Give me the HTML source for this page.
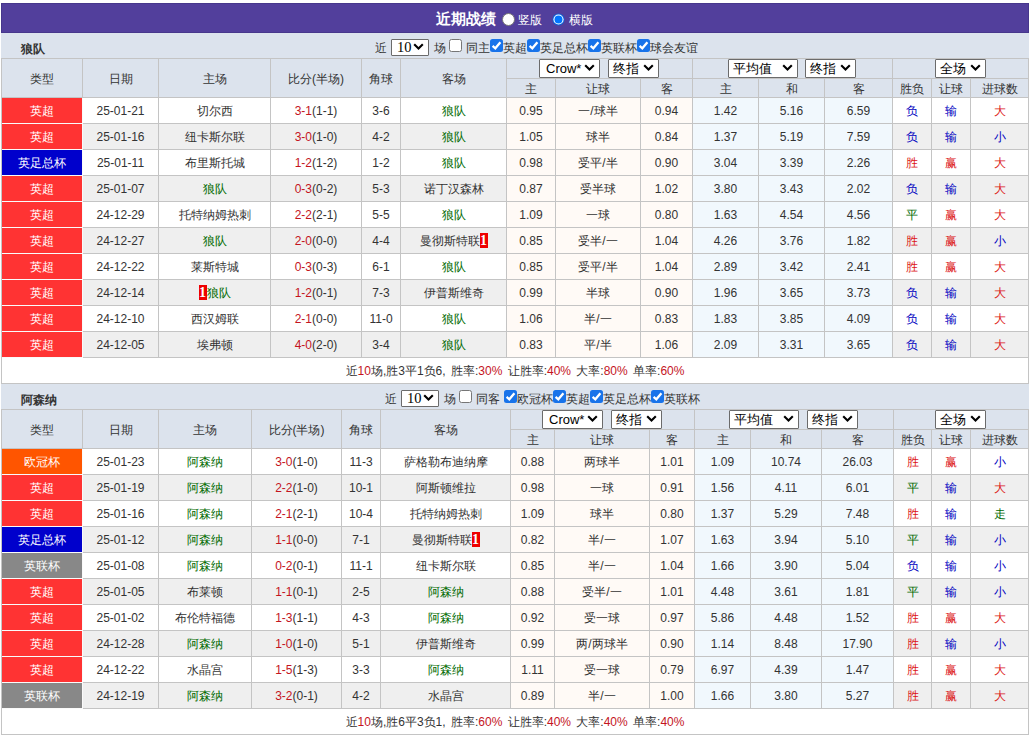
<!DOCTYPE html>
<html><head><meta charset="utf-8"><style>
html,body{margin:0;padding:0;background:#fff;}
body{width:1031px;height:735px;overflow:hidden;position:relative;font-family:"Liberation Sans",sans-serif;font-size:12px;color:#333;}
body>div{position:absolute;}
div svg{display:block;}
.bd{display:inline-block;background:#e00;color:#fff;font-family:"Liberation Serif",serif;font-weight:bold;font-size:14px;line-height:15px;height:15px;width:8px;text-align:center;vertical-align:middle;position:relative;top:-1px;}
</style></head><body>
<div style="left:1px;top:3px;width:1028px;height:30px;background:#523f9c;box-shadow:inset 0 0 0 1px #47378c"></div>
<div style="left:1px;top:33px;width:1028px;height:1px;background:#e4e3f7"></div>
<div style="left:436px;top:4px;white-space:nowrap;font-size:15px;font-weight:bold;color:#fff;line-height:30px">近期战绩</div>
<div style="left:502px;top:13px;width:13px;height:13px;"><svg width="13" height="13" viewBox="0 0 13 13"><circle cx="6.5" cy="6.5" r="6" fill="#fff" stroke="#767676" stroke-width="1"/></svg></div>
<div style="left:518px;top:5px;white-space:nowrap;font-size:12px;color:#fff;line-height:30px">竖版</div>
<div style="left:552px;top:13px;width:13px;height:13px;"><svg width="13" height="13" viewBox="0 0 13 13"><circle cx="6.5" cy="6.5" r="6" fill="#0a62d8"/><circle cx="6.5" cy="6.5" r="5.1" fill="#fff"/><circle cx="6.5" cy="6.5" r="4" fill="#0075ff"/></svg></div>
<div style="left:569px;top:5px;white-space:nowrap;font-size:12px;color:#fff;line-height:30px">横版</div>
<div style="left:1px;top:33px;width:1028px;height:25px;background:#dce3ed"></div>
<div style="left:21px;top:37px;white-space:nowrap;font-weight:bold;line-height:25px">狼队</div>
<div style="left:375px;top:36px;white-space:nowrap;line-height:25px">近</div>
<div style="left:391px;top:39px;width:38px;height:17px;background:#fff;border:1px solid #6b6b6b;border-radius:1px;box-sizing:border-box"><span style="position:absolute;left:5px;top:0px;line-height:15px;font-size:13px;color:#000"><span style="font-family:Liberation Serif;font-size:14.5px">10</span></span><svg width="11" height="7" viewBox="0 0 11 7" style="position:absolute;right:4px;top:3px"><path d="M1.2 1.2 L5.5 5.5 L9.8 1.2" fill="none" stroke="#000" stroke-width="2.1"/></svg></div>
<div style="left:434px;top:36px;white-space:nowrap;line-height:25px">场</div>
<div style="left:449px;top:39px;width:13px;height:13px;"><svg width="13" height="13" viewBox="0 0 13 13"><rect x="0.5" y="0.5" width="12" height="12" rx="2" fill="#fff" stroke="#767676" stroke-width="1"/></svg></div>
<div style="left:466px;top:36px;white-space:nowrap;line-height:25px">同主</div>
<div style="left:490px;top:39px;width:13px;height:13px;"><svg width="13" height="13" viewBox="0 0 13 13"><rect x="0" y="0" width="13" height="13" rx="2.5" fill="#1873ea"/><path d="M2.6 6.9 L5.3 9.3 L10.4 3.2" fill="none" stroke="#fff" stroke-width="2.3"/></svg></div>
<div style="left:503px;top:36px;white-space:nowrap;line-height:25px">英超</div>
<div style="left:527px;top:39px;width:13px;height:13px;"><svg width="13" height="13" viewBox="0 0 13 13"><rect x="0" y="0" width="13" height="13" rx="2.5" fill="#1873ea"/><path d="M2.6 6.9 L5.3 9.3 L10.4 3.2" fill="none" stroke="#fff" stroke-width="2.3"/></svg></div>
<div style="left:540px;top:36px;white-space:nowrap;line-height:25px">英足总杯</div>
<div style="left:588px;top:39px;width:13px;height:13px;"><svg width="13" height="13" viewBox="0 0 13 13"><rect x="0" y="0" width="13" height="13" rx="2.5" fill="#1873ea"/><path d="M2.6 6.9 L5.3 9.3 L10.4 3.2" fill="none" stroke="#fff" stroke-width="2.3"/></svg></div>
<div style="left:601px;top:36px;white-space:nowrap;line-height:25px">英联杯</div>
<div style="left:637px;top:39px;width:13px;height:13px;"><svg width="13" height="13" viewBox="0 0 13 13"><rect x="0" y="0" width="13" height="13" rx="2.5" fill="#1873ea"/><path d="M2.6 6.9 L5.3 9.3 L10.4 3.2" fill="none" stroke="#fff" stroke-width="2.3"/></svg></div>
<div style="left:650px;top:36px;white-space:nowrap;line-height:25px">球会友谊</div>
<div style="left:1px;top:58px;width:1028px;height:39px;background:#dce3ed"></div>
<div style="left:1px;top:58px;width:1028px;height:1px;background:#c4c4c4"></div>
<div style="left:506px;top:78px;width:523px;height:1px;background:#c4c4c4"></div>
<div style="left:1px;top:58px;width:1px;height:40px;background:#c4c4c4"></div>
<div style="left:82px;top:58px;width:1px;height:40px;background:#c4c4c4"></div>
<div style="left:158px;top:58px;width:1px;height:40px;background:#c4c4c4"></div>
<div style="left:270px;top:58px;width:1px;height:40px;background:#c4c4c4"></div>
<div style="left:361px;top:58px;width:1px;height:40px;background:#c4c4c4"></div>
<div style="left:400px;top:58px;width:1px;height:40px;background:#c4c4c4"></div>
<div style="left:506px;top:58px;width:1px;height:40px;background:#c4c4c4"></div>
<div style="left:692px;top:58px;width:1px;height:40px;background:#c4c4c4"></div>
<div style="left:892px;top:58px;width:1px;height:40px;background:#c4c4c4"></div>
<div style="left:1028px;top:58px;width:1px;height:40px;background:#c4c4c4"></div>
<div style="left:555px;top:78px;width:1px;height:20px;background:#c4c4c4"></div>
<div style="left:640px;top:78px;width:1px;height:20px;background:#c4c4c4"></div>
<div style="left:758px;top:78px;width:1px;height:20px;background:#c4c4c4"></div>
<div style="left:824px;top:78px;width:1px;height:20px;background:#c4c4c4"></div>
<div style="left:931px;top:78px;width:1px;height:20px;background:#c4c4c4"></div>
<div style="left:970px;top:78px;width:1px;height:20px;background:#c4c4c4"></div>
<div style="left:2px;top:59px;width:80px;height:38px;line-height:40px;text-align:center;white-space:nowrap;">类型</div>
<div style="left:83px;top:59px;width:75px;height:38px;line-height:40px;text-align:center;white-space:nowrap;">日期</div>
<div style="left:159px;top:59px;width:111px;height:38px;line-height:40px;text-align:center;white-space:nowrap;">主场</div>
<div style="left:271px;top:59px;width:90px;height:38px;line-height:40px;text-align:center;white-space:nowrap;">比分(半场)</div>
<div style="left:362px;top:59px;width:38px;height:38px;line-height:40px;text-align:center;white-space:nowrap;">角球</div>
<div style="left:401px;top:59px;width:105px;height:38px;line-height:40px;text-align:center;white-space:nowrap;">客场</div>
<div style="left:507px;top:79px;width:48px;height:18px;line-height:20px;text-align:center;white-space:nowrap;">主</div>
<div style="left:556px;top:79px;width:84px;height:18px;line-height:20px;text-align:center;white-space:nowrap;">让球</div>
<div style="left:641px;top:79px;width:51px;height:18px;line-height:20px;text-align:center;white-space:nowrap;">客</div>
<div style="left:693px;top:79px;width:65px;height:18px;line-height:20px;text-align:center;white-space:nowrap;">主</div>
<div style="left:759px;top:79px;width:65px;height:18px;line-height:20px;text-align:center;white-space:nowrap;">和</div>
<div style="left:825px;top:79px;width:67px;height:18px;line-height:20px;text-align:center;white-space:nowrap;">客</div>
<div style="left:893px;top:79px;width:38px;height:18px;line-height:20px;text-align:center;white-space:nowrap;">胜负</div>
<div style="left:932px;top:79px;width:38px;height:18px;line-height:20px;text-align:center;white-space:nowrap;">让球</div>
<div style="left:971px;top:79px;width:57px;height:18px;line-height:20px;text-align:center;white-space:nowrap;">进球数</div>
<div style="left:1px;top:98px;width:1028px;height:25px;background:#fff"></div>
<div style="left:2px;top:98px;width:80px;height:25px;background:#ff3333;line-height:27px;text-align:center;white-space:nowrap;color:#fff">英超</div>
<div style="left:83px;top:98px;width:75px;height:25px;line-height:27px;text-align:center;white-space:nowrap;">25-01-21</div>
<div style="left:159px;top:98px;width:111px;height:25px;line-height:27px;text-align:center;white-space:nowrap;">切尔西</div>
<div style="left:271px;top:98px;width:90px;height:25px;line-height:27px;text-align:center;white-space:nowrap;"><span style="color:#c4141e">3-1</span>(1-1)</div>
<div style="left:362px;top:98px;width:38px;height:25px;line-height:27px;text-align:center;white-space:nowrap;">3-6</div>
<div style="left:401px;top:98px;width:105px;height:25px;line-height:27px;text-align:center;white-space:nowrap;"><span style="color:#006a00">狼队</span></div>
<div style="left:507px;top:98px;width:48px;height:25px;background:#fffaf6;line-height:27px;text-align:center;white-space:nowrap;">0.95</div>
<div style="left:556px;top:98px;width:84px;height:25px;background:#fffaf6;line-height:27px;text-align:center;white-space:nowrap;">一/球半</div>
<div style="left:641px;top:98px;width:51px;height:25px;background:#fffaf6;line-height:27px;text-align:center;white-space:nowrap;">0.94</div>
<div style="left:693px;top:98px;width:65px;height:25px;background:#f1f8fd;line-height:27px;text-align:center;white-space:nowrap;">1.42</div>
<div style="left:759px;top:98px;width:65px;height:25px;background:#f1f8fd;line-height:27px;text-align:center;white-space:nowrap;">5.16</div>
<div style="left:825px;top:98px;width:67px;height:25px;background:#f1f8fd;line-height:27px;text-align:center;white-space:nowrap;">6.59</div>
<div style="left:893px;top:98px;width:38px;height:25px;line-height:27px;text-align:center;white-space:nowrap;"><span style="color:#0000c0">负</span></div>
<div style="left:932px;top:98px;width:38px;height:25px;line-height:27px;text-align:center;white-space:nowrap;"><span style="color:#0000c0">输</span></div>
<div style="left:971px;top:98px;width:57px;height:25px;line-height:27px;text-align:center;white-space:nowrap;"><span style="color:#dc1414">大</span></div>
<div style="left:1px;top:123px;width:1028px;height:1px;background:#c4c4c4"></div>
<div style="left:1px;top:124px;width:1028px;height:25px;background:#efefef"></div>
<div style="left:2px;top:124px;width:80px;height:25px;background:#ff3333;line-height:27px;text-align:center;white-space:nowrap;color:#fff">英超</div>
<div style="left:83px;top:124px;width:75px;height:25px;line-height:27px;text-align:center;white-space:nowrap;">25-01-16</div>
<div style="left:159px;top:124px;width:111px;height:25px;line-height:27px;text-align:center;white-space:nowrap;">纽卡斯尔联</div>
<div style="left:271px;top:124px;width:90px;height:25px;line-height:27px;text-align:center;white-space:nowrap;"><span style="color:#c4141e">3-0</span>(1-0)</div>
<div style="left:362px;top:124px;width:38px;height:25px;line-height:27px;text-align:center;white-space:nowrap;">4-2</div>
<div style="left:401px;top:124px;width:105px;height:25px;line-height:27px;text-align:center;white-space:nowrap;"><span style="color:#006a00">狼队</span></div>
<div style="left:507px;top:124px;width:48px;height:25px;background:#fffaf6;line-height:27px;text-align:center;white-space:nowrap;">1.05</div>
<div style="left:556px;top:124px;width:84px;height:25px;background:#fffaf6;line-height:27px;text-align:center;white-space:nowrap;">球半</div>
<div style="left:641px;top:124px;width:51px;height:25px;background:#fffaf6;line-height:27px;text-align:center;white-space:nowrap;">0.84</div>
<div style="left:693px;top:124px;width:65px;height:25px;background:#f1f8fd;line-height:27px;text-align:center;white-space:nowrap;">1.37</div>
<div style="left:759px;top:124px;width:65px;height:25px;background:#f1f8fd;line-height:27px;text-align:center;white-space:nowrap;">5.19</div>
<div style="left:825px;top:124px;width:67px;height:25px;background:#f1f8fd;line-height:27px;text-align:center;white-space:nowrap;">7.59</div>
<div style="left:893px;top:124px;width:38px;height:25px;line-height:27px;text-align:center;white-space:nowrap;"><span style="color:#0000c0">负</span></div>
<div style="left:932px;top:124px;width:38px;height:25px;line-height:27px;text-align:center;white-space:nowrap;"><span style="color:#0000c0">输</span></div>
<div style="left:971px;top:124px;width:57px;height:25px;line-height:27px;text-align:center;white-space:nowrap;"><span style="color:#0000c0">小</span></div>
<div style="left:1px;top:149px;width:1028px;height:1px;background:#c4c4c4"></div>
<div style="left:1px;top:150px;width:1028px;height:25px;background:#fff"></div>
<div style="left:2px;top:150px;width:80px;height:25px;background:#0000cc;line-height:27px;text-align:center;white-space:nowrap;color:#fff">英足总杯</div>
<div style="left:83px;top:150px;width:75px;height:25px;line-height:27px;text-align:center;white-space:nowrap;">25-01-11</div>
<div style="left:159px;top:150px;width:111px;height:25px;line-height:27px;text-align:center;white-space:nowrap;">布里斯托城</div>
<div style="left:271px;top:150px;width:90px;height:25px;line-height:27px;text-align:center;white-space:nowrap;"><span style="color:#c4141e">1-2</span>(1-2)</div>
<div style="left:362px;top:150px;width:38px;height:25px;line-height:27px;text-align:center;white-space:nowrap;">1-2</div>
<div style="left:401px;top:150px;width:105px;height:25px;line-height:27px;text-align:center;white-space:nowrap;"><span style="color:#006a00">狼队</span></div>
<div style="left:507px;top:150px;width:48px;height:25px;background:#fffaf6;line-height:27px;text-align:center;white-space:nowrap;">0.98</div>
<div style="left:556px;top:150px;width:84px;height:25px;background:#fffaf6;line-height:27px;text-align:center;white-space:nowrap;">受平/半</div>
<div style="left:641px;top:150px;width:51px;height:25px;background:#fffaf6;line-height:27px;text-align:center;white-space:nowrap;">0.90</div>
<div style="left:693px;top:150px;width:65px;height:25px;background:#f1f8fd;line-height:27px;text-align:center;white-space:nowrap;">3.04</div>
<div style="left:759px;top:150px;width:65px;height:25px;background:#f1f8fd;line-height:27px;text-align:center;white-space:nowrap;">3.39</div>
<div style="left:825px;top:150px;width:67px;height:25px;background:#f1f8fd;line-height:27px;text-align:center;white-space:nowrap;">2.26</div>
<div style="left:893px;top:150px;width:38px;height:25px;line-height:27px;text-align:center;white-space:nowrap;"><span style="color:#dc1414">胜</span></div>
<div style="left:932px;top:150px;width:38px;height:25px;line-height:27px;text-align:center;white-space:nowrap;"><span style="color:#dc1414">赢</span></div>
<div style="left:971px;top:150px;width:57px;height:25px;line-height:27px;text-align:center;white-space:nowrap;"><span style="color:#dc1414">大</span></div>
<div style="left:1px;top:175px;width:1028px;height:1px;background:#c4c4c4"></div>
<div style="left:1px;top:176px;width:1028px;height:25px;background:#efefef"></div>
<div style="left:2px;top:176px;width:80px;height:25px;background:#ff3333;line-height:27px;text-align:center;white-space:nowrap;color:#fff">英超</div>
<div style="left:83px;top:176px;width:75px;height:25px;line-height:27px;text-align:center;white-space:nowrap;">25-01-07</div>
<div style="left:159px;top:176px;width:111px;height:25px;line-height:27px;text-align:center;white-space:nowrap;"><span style="color:#006a00">狼队</span></div>
<div style="left:271px;top:176px;width:90px;height:25px;line-height:27px;text-align:center;white-space:nowrap;"><span style="color:#c4141e">0-3</span>(0-2)</div>
<div style="left:362px;top:176px;width:38px;height:25px;line-height:27px;text-align:center;white-space:nowrap;">5-3</div>
<div style="left:401px;top:176px;width:105px;height:25px;line-height:27px;text-align:center;white-space:nowrap;">诺丁汉森林</div>
<div style="left:507px;top:176px;width:48px;height:25px;background:#fffaf6;line-height:27px;text-align:center;white-space:nowrap;">0.87</div>
<div style="left:556px;top:176px;width:84px;height:25px;background:#fffaf6;line-height:27px;text-align:center;white-space:nowrap;">受半球</div>
<div style="left:641px;top:176px;width:51px;height:25px;background:#fffaf6;line-height:27px;text-align:center;white-space:nowrap;">1.02</div>
<div style="left:693px;top:176px;width:65px;height:25px;background:#f1f8fd;line-height:27px;text-align:center;white-space:nowrap;">3.80</div>
<div style="left:759px;top:176px;width:65px;height:25px;background:#f1f8fd;line-height:27px;text-align:center;white-space:nowrap;">3.43</div>
<div style="left:825px;top:176px;width:67px;height:25px;background:#f1f8fd;line-height:27px;text-align:center;white-space:nowrap;">2.02</div>
<div style="left:893px;top:176px;width:38px;height:25px;line-height:27px;text-align:center;white-space:nowrap;"><span style="color:#0000c0">负</span></div>
<div style="left:932px;top:176px;width:38px;height:25px;line-height:27px;text-align:center;white-space:nowrap;"><span style="color:#0000c0">输</span></div>
<div style="left:971px;top:176px;width:57px;height:25px;line-height:27px;text-align:center;white-space:nowrap;"><span style="color:#dc1414">大</span></div>
<div style="left:1px;top:201px;width:1028px;height:1px;background:#c4c4c4"></div>
<div style="left:1px;top:202px;width:1028px;height:25px;background:#fff"></div>
<div style="left:2px;top:202px;width:80px;height:25px;background:#ff3333;line-height:27px;text-align:center;white-space:nowrap;color:#fff">英超</div>
<div style="left:83px;top:202px;width:75px;height:25px;line-height:27px;text-align:center;white-space:nowrap;">24-12-29</div>
<div style="left:159px;top:202px;width:111px;height:25px;line-height:27px;text-align:center;white-space:nowrap;">托特纳姆热刺</div>
<div style="left:271px;top:202px;width:90px;height:25px;line-height:27px;text-align:center;white-space:nowrap;"><span style="color:#c4141e">2-2</span>(2-1)</div>
<div style="left:362px;top:202px;width:38px;height:25px;line-height:27px;text-align:center;white-space:nowrap;">5-5</div>
<div style="left:401px;top:202px;width:105px;height:25px;line-height:27px;text-align:center;white-space:nowrap;"><span style="color:#006a00">狼队</span></div>
<div style="left:507px;top:202px;width:48px;height:25px;background:#fffaf6;line-height:27px;text-align:center;white-space:nowrap;">1.09</div>
<div style="left:556px;top:202px;width:84px;height:25px;background:#fffaf6;line-height:27px;text-align:center;white-space:nowrap;">一球</div>
<div style="left:641px;top:202px;width:51px;height:25px;background:#fffaf6;line-height:27px;text-align:center;white-space:nowrap;">0.80</div>
<div style="left:693px;top:202px;width:65px;height:25px;background:#f1f8fd;line-height:27px;text-align:center;white-space:nowrap;">1.63</div>
<div style="left:759px;top:202px;width:65px;height:25px;background:#f1f8fd;line-height:27px;text-align:center;white-space:nowrap;">4.54</div>
<div style="left:825px;top:202px;width:67px;height:25px;background:#f1f8fd;line-height:27px;text-align:center;white-space:nowrap;">4.56</div>
<div style="left:893px;top:202px;width:38px;height:25px;line-height:27px;text-align:center;white-space:nowrap;"><span style="color:#006a00">平</span></div>
<div style="left:932px;top:202px;width:38px;height:25px;line-height:27px;text-align:center;white-space:nowrap;"><span style="color:#dc1414">赢</span></div>
<div style="left:971px;top:202px;width:57px;height:25px;line-height:27px;text-align:center;white-space:nowrap;"><span style="color:#dc1414">大</span></div>
<div style="left:1px;top:227px;width:1028px;height:1px;background:#c4c4c4"></div>
<div style="left:1px;top:228px;width:1028px;height:25px;background:#efefef"></div>
<div style="left:2px;top:228px;width:80px;height:25px;background:#ff3333;line-height:27px;text-align:center;white-space:nowrap;color:#fff">英超</div>
<div style="left:83px;top:228px;width:75px;height:25px;line-height:27px;text-align:center;white-space:nowrap;">24-12-27</div>
<div style="left:159px;top:228px;width:111px;height:25px;line-height:27px;text-align:center;white-space:nowrap;"><span style="color:#006a00">狼队</span></div>
<div style="left:271px;top:228px;width:90px;height:25px;line-height:27px;text-align:center;white-space:nowrap;"><span style="color:#c4141e">2-0</span>(0-0)</div>
<div style="left:362px;top:228px;width:38px;height:25px;line-height:27px;text-align:center;white-space:nowrap;">4-4</div>
<div style="left:401px;top:228px;width:105px;height:25px;line-height:27px;text-align:center;white-space:nowrap;">曼彻斯特联<span class="bd">1</span></div>
<div style="left:507px;top:228px;width:48px;height:25px;background:#fffaf6;line-height:27px;text-align:center;white-space:nowrap;">0.85</div>
<div style="left:556px;top:228px;width:84px;height:25px;background:#fffaf6;line-height:27px;text-align:center;white-space:nowrap;">受半/一</div>
<div style="left:641px;top:228px;width:51px;height:25px;background:#fffaf6;line-height:27px;text-align:center;white-space:nowrap;">1.04</div>
<div style="left:693px;top:228px;width:65px;height:25px;background:#f1f8fd;line-height:27px;text-align:center;white-space:nowrap;">4.26</div>
<div style="left:759px;top:228px;width:65px;height:25px;background:#f1f8fd;line-height:27px;text-align:center;white-space:nowrap;">3.76</div>
<div style="left:825px;top:228px;width:67px;height:25px;background:#f1f8fd;line-height:27px;text-align:center;white-space:nowrap;">1.82</div>
<div style="left:893px;top:228px;width:38px;height:25px;line-height:27px;text-align:center;white-space:nowrap;"><span style="color:#dc1414">胜</span></div>
<div style="left:932px;top:228px;width:38px;height:25px;line-height:27px;text-align:center;white-space:nowrap;"><span style="color:#dc1414">赢</span></div>
<div style="left:971px;top:228px;width:57px;height:25px;line-height:27px;text-align:center;white-space:nowrap;"><span style="color:#0000c0">小</span></div>
<div style="left:1px;top:253px;width:1028px;height:1px;background:#c4c4c4"></div>
<div style="left:1px;top:254px;width:1028px;height:25px;background:#fff"></div>
<div style="left:2px;top:254px;width:80px;height:25px;background:#ff3333;line-height:27px;text-align:center;white-space:nowrap;color:#fff">英超</div>
<div style="left:83px;top:254px;width:75px;height:25px;line-height:27px;text-align:center;white-space:nowrap;">24-12-22</div>
<div style="left:159px;top:254px;width:111px;height:25px;line-height:27px;text-align:center;white-space:nowrap;">莱斯特城</div>
<div style="left:271px;top:254px;width:90px;height:25px;line-height:27px;text-align:center;white-space:nowrap;"><span style="color:#c4141e">0-3</span>(0-3)</div>
<div style="left:362px;top:254px;width:38px;height:25px;line-height:27px;text-align:center;white-space:nowrap;">6-1</div>
<div style="left:401px;top:254px;width:105px;height:25px;line-height:27px;text-align:center;white-space:nowrap;"><span style="color:#006a00">狼队</span></div>
<div style="left:507px;top:254px;width:48px;height:25px;background:#fffaf6;line-height:27px;text-align:center;white-space:nowrap;">0.85</div>
<div style="left:556px;top:254px;width:84px;height:25px;background:#fffaf6;line-height:27px;text-align:center;white-space:nowrap;">受平/半</div>
<div style="left:641px;top:254px;width:51px;height:25px;background:#fffaf6;line-height:27px;text-align:center;white-space:nowrap;">1.04</div>
<div style="left:693px;top:254px;width:65px;height:25px;background:#f1f8fd;line-height:27px;text-align:center;white-space:nowrap;">2.89</div>
<div style="left:759px;top:254px;width:65px;height:25px;background:#f1f8fd;line-height:27px;text-align:center;white-space:nowrap;">3.42</div>
<div style="left:825px;top:254px;width:67px;height:25px;background:#f1f8fd;line-height:27px;text-align:center;white-space:nowrap;">2.41</div>
<div style="left:893px;top:254px;width:38px;height:25px;line-height:27px;text-align:center;white-space:nowrap;"><span style="color:#dc1414">胜</span></div>
<div style="left:932px;top:254px;width:38px;height:25px;line-height:27px;text-align:center;white-space:nowrap;"><span style="color:#dc1414">赢</span></div>
<div style="left:971px;top:254px;width:57px;height:25px;line-height:27px;text-align:center;white-space:nowrap;"><span style="color:#dc1414">大</span></div>
<div style="left:1px;top:279px;width:1028px;height:1px;background:#c4c4c4"></div>
<div style="left:1px;top:280px;width:1028px;height:25px;background:#efefef"></div>
<div style="left:2px;top:280px;width:80px;height:25px;background:#ff3333;line-height:27px;text-align:center;white-space:nowrap;color:#fff">英超</div>
<div style="left:83px;top:280px;width:75px;height:25px;line-height:27px;text-align:center;white-space:nowrap;">24-12-14</div>
<div style="left:159px;top:280px;width:111px;height:25px;line-height:27px;text-align:center;white-space:nowrap;"><span class="bd">1</span><span style="color:#006a00">狼队</span></div>
<div style="left:271px;top:280px;width:90px;height:25px;line-height:27px;text-align:center;white-space:nowrap;"><span style="color:#c4141e">1-2</span>(0-1)</div>
<div style="left:362px;top:280px;width:38px;height:25px;line-height:27px;text-align:center;white-space:nowrap;">7-3</div>
<div style="left:401px;top:280px;width:105px;height:25px;line-height:27px;text-align:center;white-space:nowrap;">伊普斯维奇</div>
<div style="left:507px;top:280px;width:48px;height:25px;background:#fffaf6;line-height:27px;text-align:center;white-space:nowrap;">0.99</div>
<div style="left:556px;top:280px;width:84px;height:25px;background:#fffaf6;line-height:27px;text-align:center;white-space:nowrap;">半球</div>
<div style="left:641px;top:280px;width:51px;height:25px;background:#fffaf6;line-height:27px;text-align:center;white-space:nowrap;">0.90</div>
<div style="left:693px;top:280px;width:65px;height:25px;background:#f1f8fd;line-height:27px;text-align:center;white-space:nowrap;">1.96</div>
<div style="left:759px;top:280px;width:65px;height:25px;background:#f1f8fd;line-height:27px;text-align:center;white-space:nowrap;">3.65</div>
<div style="left:825px;top:280px;width:67px;height:25px;background:#f1f8fd;line-height:27px;text-align:center;white-space:nowrap;">3.73</div>
<div style="left:893px;top:280px;width:38px;height:25px;line-height:27px;text-align:center;white-space:nowrap;"><span style="color:#0000c0">负</span></div>
<div style="left:932px;top:280px;width:38px;height:25px;line-height:27px;text-align:center;white-space:nowrap;"><span style="color:#0000c0">输</span></div>
<div style="left:971px;top:280px;width:57px;height:25px;line-height:27px;text-align:center;white-space:nowrap;"><span style="color:#dc1414">大</span></div>
<div style="left:1px;top:305px;width:1028px;height:1px;background:#c4c4c4"></div>
<div style="left:1px;top:306px;width:1028px;height:25px;background:#fff"></div>
<div style="left:2px;top:306px;width:80px;height:25px;background:#ff3333;line-height:27px;text-align:center;white-space:nowrap;color:#fff">英超</div>
<div style="left:83px;top:306px;width:75px;height:25px;line-height:27px;text-align:center;white-space:nowrap;">24-12-10</div>
<div style="left:159px;top:306px;width:111px;height:25px;line-height:27px;text-align:center;white-space:nowrap;">西汉姆联</div>
<div style="left:271px;top:306px;width:90px;height:25px;line-height:27px;text-align:center;white-space:nowrap;"><span style="color:#c4141e">2-1</span>(0-0)</div>
<div style="left:362px;top:306px;width:38px;height:25px;line-height:27px;text-align:center;white-space:nowrap;">11-0</div>
<div style="left:401px;top:306px;width:105px;height:25px;line-height:27px;text-align:center;white-space:nowrap;"><span style="color:#006a00">狼队</span></div>
<div style="left:507px;top:306px;width:48px;height:25px;background:#fffaf6;line-height:27px;text-align:center;white-space:nowrap;">1.06</div>
<div style="left:556px;top:306px;width:84px;height:25px;background:#fffaf6;line-height:27px;text-align:center;white-space:nowrap;">半/一</div>
<div style="left:641px;top:306px;width:51px;height:25px;background:#fffaf6;line-height:27px;text-align:center;white-space:nowrap;">0.83</div>
<div style="left:693px;top:306px;width:65px;height:25px;background:#f1f8fd;line-height:27px;text-align:center;white-space:nowrap;">1.83</div>
<div style="left:759px;top:306px;width:65px;height:25px;background:#f1f8fd;line-height:27px;text-align:center;white-space:nowrap;">3.85</div>
<div style="left:825px;top:306px;width:67px;height:25px;background:#f1f8fd;line-height:27px;text-align:center;white-space:nowrap;">4.09</div>
<div style="left:893px;top:306px;width:38px;height:25px;line-height:27px;text-align:center;white-space:nowrap;"><span style="color:#0000c0">负</span></div>
<div style="left:932px;top:306px;width:38px;height:25px;line-height:27px;text-align:center;white-space:nowrap;"><span style="color:#0000c0">输</span></div>
<div style="left:971px;top:306px;width:57px;height:25px;line-height:27px;text-align:center;white-space:nowrap;"><span style="color:#dc1414">大</span></div>
<div style="left:1px;top:331px;width:1028px;height:1px;background:#c4c4c4"></div>
<div style="left:1px;top:332px;width:1028px;height:25px;background:#efefef"></div>
<div style="left:2px;top:332px;width:80px;height:25px;background:#ff3333;line-height:27px;text-align:center;white-space:nowrap;color:#fff">英超</div>
<div style="left:83px;top:332px;width:75px;height:25px;line-height:27px;text-align:center;white-space:nowrap;">24-12-05</div>
<div style="left:159px;top:332px;width:111px;height:25px;line-height:27px;text-align:center;white-space:nowrap;">埃弗顿</div>
<div style="left:271px;top:332px;width:90px;height:25px;line-height:27px;text-align:center;white-space:nowrap;"><span style="color:#c4141e">4-0</span>(2-0)</div>
<div style="left:362px;top:332px;width:38px;height:25px;line-height:27px;text-align:center;white-space:nowrap;">3-4</div>
<div style="left:401px;top:332px;width:105px;height:25px;line-height:27px;text-align:center;white-space:nowrap;"><span style="color:#006a00">狼队</span></div>
<div style="left:507px;top:332px;width:48px;height:25px;background:#fffaf6;line-height:27px;text-align:center;white-space:nowrap;">0.83</div>
<div style="left:556px;top:332px;width:84px;height:25px;background:#fffaf6;line-height:27px;text-align:center;white-space:nowrap;">平/半</div>
<div style="left:641px;top:332px;width:51px;height:25px;background:#fffaf6;line-height:27px;text-align:center;white-space:nowrap;">1.06</div>
<div style="left:693px;top:332px;width:65px;height:25px;background:#f1f8fd;line-height:27px;text-align:center;white-space:nowrap;">2.09</div>
<div style="left:759px;top:332px;width:65px;height:25px;background:#f1f8fd;line-height:27px;text-align:center;white-space:nowrap;">3.31</div>
<div style="left:825px;top:332px;width:67px;height:25px;background:#f1f8fd;line-height:27px;text-align:center;white-space:nowrap;">3.65</div>
<div style="left:893px;top:332px;width:38px;height:25px;line-height:27px;text-align:center;white-space:nowrap;"><span style="color:#0000c0">负</span></div>
<div style="left:932px;top:332px;width:38px;height:25px;line-height:27px;text-align:center;white-space:nowrap;"><span style="color:#0000c0">输</span></div>
<div style="left:971px;top:332px;width:57px;height:25px;line-height:27px;text-align:center;white-space:nowrap;"><span style="color:#dc1414">大</span></div>
<div style="left:1px;top:357px;width:1028px;height:1px;background:#c4c4c4"></div>
<div style="left:1px;top:97px;width:1px;height:261px;background:#c4c4c4"></div>
<div style="left:82px;top:97px;width:1px;height:261px;background:#c4c4c4"></div>
<div style="left:158px;top:97px;width:1px;height:261px;background:#c4c4c4"></div>
<div style="left:270px;top:97px;width:1px;height:261px;background:#c4c4c4"></div>
<div style="left:361px;top:97px;width:1px;height:261px;background:#c4c4c4"></div>
<div style="left:400px;top:97px;width:1px;height:261px;background:#c4c4c4"></div>
<div style="left:506px;top:97px;width:1px;height:261px;background:#c4c4c4"></div>
<div style="left:555px;top:97px;width:1px;height:261px;background:#c4c4c4"></div>
<div style="left:640px;top:97px;width:1px;height:261px;background:#c4c4c4"></div>
<div style="left:692px;top:97px;width:1px;height:261px;background:#c4c4c4"></div>
<div style="left:758px;top:97px;width:1px;height:261px;background:#c4c4c4"></div>
<div style="left:824px;top:97px;width:1px;height:261px;background:#c4c4c4"></div>
<div style="left:892px;top:97px;width:1px;height:261px;background:#c4c4c4"></div>
<div style="left:931px;top:97px;width:1px;height:261px;background:#c4c4c4"></div>
<div style="left:970px;top:97px;width:1px;height:261px;background:#c4c4c4"></div>
<div style="left:1028px;top:97px;width:1px;height:261px;background:#c4c4c4"></div>
<div style="left:1px;top:97px;width:1028px;height:1px;background:#c4c4c4"></div>
<div style="left:82px;top:98px;width:1px;height:260px;background:#fafafa"></div>
<div style="left:2px;top:123px;width:80px;height:1px;background:#fafafa"></div>
<div style="left:2px;top:149px;width:80px;height:1px;background:#fafafa"></div>
<div style="left:2px;top:175px;width:80px;height:1px;background:#fafafa"></div>
<div style="left:2px;top:201px;width:80px;height:1px;background:#fafafa"></div>
<div style="left:2px;top:227px;width:80px;height:1px;background:#fafafa"></div>
<div style="left:2px;top:253px;width:80px;height:1px;background:#fafafa"></div>
<div style="left:2px;top:279px;width:80px;height:1px;background:#fafafa"></div>
<div style="left:2px;top:305px;width:80px;height:1px;background:#fafafa"></div>
<div style="left:2px;top:331px;width:80px;height:1px;background:#fafafa"></div>
<div style="left:2px;top:357px;width:80px;height:1px;background:#fafafa"></div>
<div style="left:2px;top:358px;width:1026px;height:25px;background:#fff;line-height:27px;text-align:center;white-space:nowrap;word-spacing:2px">近<span style="color:#c4141e">10</span>场,胜3平1负6, 胜率:<span style="color:#c4141e">30%</span> 让胜率:<span style="color:#c4141e">40%</span> 大率:<span style="color:#c4141e">80%</span> 单率:<span style="color:#c4141e">60%</span></div>
<div style="left:1px;top:357px;width:1px;height:27px;background:#c4c4c4"></div>
<div style="left:1028px;top:357px;width:1px;height:27px;background:#c4c4c4"></div>
<div style="left:1px;top:383px;width:1028px;height:1px;background:#c4c4c4"></div>
<div style="left:539px;top:59px;width:61px;height:19px;background:#fff;border:1px solid #6b6b6b;border-radius:1px;box-sizing:border-box"><span style="position:absolute;left:6px;top:0px;line-height:17px;font-size:13px;color:#000">Crow*</span><svg width="11" height="7" viewBox="0 0 11 7" style="position:absolute;right:4px;top:4px"><path d="M1.2 1.2 L5.5 5.5 L9.8 1.2" fill="none" stroke="#000" stroke-width="2.1"/></svg></div>
<div style="left:608px;top:59px;width:51px;height:19px;background:#fff;border:1px solid #6b6b6b;border-radius:1px;box-sizing:border-box"><span style="position:absolute;left:4px;top:0px;line-height:17px;font-size:13px;color:#000">终指</span><svg width="11" height="7" viewBox="0 0 11 7" style="position:absolute;right:4px;top:4px"><path d="M1.2 1.2 L5.5 5.5 L9.8 1.2" fill="none" stroke="#000" stroke-width="2.1"/></svg></div>
<div style="left:728px;top:59px;width:70px;height:19px;background:#fff;border:1px solid #6b6b6b;border-radius:1px;box-sizing:border-box"><span style="position:absolute;left:4px;top:0px;line-height:17px;font-size:13px;color:#000">平均值</span><svg width="11" height="7" viewBox="0 0 11 7" style="position:absolute;right:4px;top:4px"><path d="M1.2 1.2 L5.5 5.5 L9.8 1.2" fill="none" stroke="#000" stroke-width="2.1"/></svg></div>
<div style="left:805px;top:59px;width:51px;height:19px;background:#fff;border:1px solid #6b6b6b;border-radius:1px;box-sizing:border-box"><span style="position:absolute;left:4px;top:0px;line-height:17px;font-size:13px;color:#000">终指</span><svg width="11" height="7" viewBox="0 0 11 7" style="position:absolute;right:4px;top:4px"><path d="M1.2 1.2 L5.5 5.5 L9.8 1.2" fill="none" stroke="#000" stroke-width="2.1"/></svg></div>
<div style="left:935px;top:59px;width:51px;height:19px;background:#fff;border:1px solid #6b6b6b;border-radius:1px;box-sizing:border-box"><span style="position:absolute;left:4px;top:0px;line-height:17px;font-size:13px;color:#000">全场</span><svg width="11" height="7" viewBox="0 0 11 7" style="position:absolute;right:4px;top:4px"><path d="M1.2 1.2 L5.5 5.5 L9.8 1.2" fill="none" stroke="#000" stroke-width="2.1"/></svg></div>
<div style="left:1px;top:383px;width:1028px;height:1px;background:#c4c4c4"></div>
<div style="left:1px;top:384px;width:1028px;height:25px;background:#dce3ed"></div>
<div style="left:21px;top:388px;white-space:nowrap;font-weight:bold;line-height:25px">阿森纳</div>
<div style="left:385px;top:387px;white-space:nowrap;line-height:25px">近</div>
<div style="left:401px;top:390px;width:38px;height:17px;background:#fff;border:1px solid #6b6b6b;border-radius:1px;box-sizing:border-box"><span style="position:absolute;left:5px;top:0px;line-height:15px;font-size:13px;color:#000"><span style="font-family:Liberation Serif;font-size:14.5px">10</span></span><svg width="11" height="7" viewBox="0 0 11 7" style="position:absolute;right:4px;top:3px"><path d="M1.2 1.2 L5.5 5.5 L9.8 1.2" fill="none" stroke="#000" stroke-width="2.1"/></svg></div>
<div style="left:444px;top:387px;white-space:nowrap;line-height:25px">场</div>
<div style="left:459px;top:390px;width:13px;height:13px;"><svg width="13" height="13" viewBox="0 0 13 13"><rect x="0.5" y="0.5" width="12" height="12" rx="2" fill="#fff" stroke="#767676" stroke-width="1"/></svg></div>
<div style="left:476px;top:387px;white-space:nowrap;line-height:25px">同客</div>
<div style="left:504px;top:390px;width:13px;height:13px;"><svg width="13" height="13" viewBox="0 0 13 13"><rect x="0" y="0" width="13" height="13" rx="2.5" fill="#1873ea"/><path d="M2.6 6.9 L5.3 9.3 L10.4 3.2" fill="none" stroke="#fff" stroke-width="2.3"/></svg></div>
<div style="left:517px;top:387px;white-space:nowrap;line-height:25px">欧冠杯</div>
<div style="left:553px;top:390px;width:13px;height:13px;"><svg width="13" height="13" viewBox="0 0 13 13"><rect x="0" y="0" width="13" height="13" rx="2.5" fill="#1873ea"/><path d="M2.6 6.9 L5.3 9.3 L10.4 3.2" fill="none" stroke="#fff" stroke-width="2.3"/></svg></div>
<div style="left:566px;top:387px;white-space:nowrap;line-height:25px">英超</div>
<div style="left:590px;top:390px;width:13px;height:13px;"><svg width="13" height="13" viewBox="0 0 13 13"><rect x="0" y="0" width="13" height="13" rx="2.5" fill="#1873ea"/><path d="M2.6 6.9 L5.3 9.3 L10.4 3.2" fill="none" stroke="#fff" stroke-width="2.3"/></svg></div>
<div style="left:603px;top:387px;white-space:nowrap;line-height:25px">英足总杯</div>
<div style="left:651px;top:390px;width:13px;height:13px;"><svg width="13" height="13" viewBox="0 0 13 13"><rect x="0" y="0" width="13" height="13" rx="2.5" fill="#1873ea"/><path d="M2.6 6.9 L5.3 9.3 L10.4 3.2" fill="none" stroke="#fff" stroke-width="2.3"/></svg></div>
<div style="left:664px;top:387px;white-space:nowrap;line-height:25px">英联杯</div>
<div style="left:1px;top:409px;width:1028px;height:39px;background:#dce3ed"></div>
<div style="left:1px;top:409px;width:1028px;height:1px;background:#c4c4c4"></div>
<div style="left:510px;top:429px;width:519px;height:1px;background:#c4c4c4"></div>
<div style="left:1px;top:409px;width:1px;height:40px;background:#c4c4c4"></div>
<div style="left:82px;top:409px;width:1px;height:40px;background:#c4c4c4"></div>
<div style="left:158px;top:409px;width:1px;height:40px;background:#c4c4c4"></div>
<div style="left:251px;top:409px;width:1px;height:40px;background:#c4c4c4"></div>
<div style="left:341px;top:409px;width:1px;height:40px;background:#c4c4c4"></div>
<div style="left:380px;top:409px;width:1px;height:40px;background:#c4c4c4"></div>
<div style="left:510px;top:409px;width:1px;height:40px;background:#c4c4c4"></div>
<div style="left:694px;top:409px;width:1px;height:40px;background:#c4c4c4"></div>
<div style="left:893px;top:409px;width:1px;height:40px;background:#c4c4c4"></div>
<div style="left:1028px;top:409px;width:1px;height:40px;background:#c4c4c4"></div>
<div style="left:554px;top:429px;width:1px;height:20px;background:#c4c4c4"></div>
<div style="left:649px;top:429px;width:1px;height:20px;background:#c4c4c4"></div>
<div style="left:750px;top:429px;width:1px;height:20px;background:#c4c4c4"></div>
<div style="left:821px;top:429px;width:1px;height:20px;background:#c4c4c4"></div>
<div style="left:931px;top:429px;width:1px;height:20px;background:#c4c4c4"></div>
<div style="left:970px;top:429px;width:1px;height:20px;background:#c4c4c4"></div>
<div style="left:2px;top:410px;width:80px;height:38px;line-height:40px;text-align:center;white-space:nowrap;">类型</div>
<div style="left:83px;top:410px;width:75px;height:38px;line-height:40px;text-align:center;white-space:nowrap;">日期</div>
<div style="left:159px;top:410px;width:92px;height:38px;line-height:40px;text-align:center;white-space:nowrap;">主场</div>
<div style="left:252px;top:410px;width:89px;height:38px;line-height:40px;text-align:center;white-space:nowrap;">比分(半场)</div>
<div style="left:342px;top:410px;width:38px;height:38px;line-height:40px;text-align:center;white-space:nowrap;">角球</div>
<div style="left:381px;top:410px;width:129px;height:38px;line-height:40px;text-align:center;white-space:nowrap;">客场</div>
<div style="left:511px;top:430px;width:43px;height:18px;line-height:20px;text-align:center;white-space:nowrap;">主</div>
<div style="left:555px;top:430px;width:94px;height:18px;line-height:20px;text-align:center;white-space:nowrap;">让球</div>
<div style="left:650px;top:430px;width:44px;height:18px;line-height:20px;text-align:center;white-space:nowrap;">客</div>
<div style="left:695px;top:430px;width:55px;height:18px;line-height:20px;text-align:center;white-space:nowrap;">主</div>
<div style="left:751px;top:430px;width:70px;height:18px;line-height:20px;text-align:center;white-space:nowrap;">和</div>
<div style="left:822px;top:430px;width:71px;height:18px;line-height:20px;text-align:center;white-space:nowrap;">客</div>
<div style="left:894px;top:430px;width:37px;height:18px;line-height:20px;text-align:center;white-space:nowrap;">胜负</div>
<div style="left:932px;top:430px;width:38px;height:18px;line-height:20px;text-align:center;white-space:nowrap;">让球</div>
<div style="left:971px;top:430px;width:57px;height:18px;line-height:20px;text-align:center;white-space:nowrap;">进球数</div>
<div style="left:1px;top:449px;width:1028px;height:25px;background:#fff"></div>
<div style="left:2px;top:449px;width:80px;height:25px;background:#ff5500;line-height:27px;text-align:center;white-space:nowrap;color:#fff">欧冠杯</div>
<div style="left:83px;top:449px;width:75px;height:25px;line-height:27px;text-align:center;white-space:nowrap;">25-01-23</div>
<div style="left:159px;top:449px;width:92px;height:25px;line-height:27px;text-align:center;white-space:nowrap;"><span style="color:#006a00">阿森纳</span></div>
<div style="left:252px;top:449px;width:89px;height:25px;line-height:27px;text-align:center;white-space:nowrap;"><span style="color:#c4141e">3-0</span>(1-0)</div>
<div style="left:342px;top:449px;width:38px;height:25px;line-height:27px;text-align:center;white-space:nowrap;">11-3</div>
<div style="left:381px;top:449px;width:129px;height:25px;line-height:27px;text-align:center;white-space:nowrap;">萨格勒布迪纳摩</div>
<div style="left:511px;top:449px;width:43px;height:25px;background:#fffaf6;line-height:27px;text-align:center;white-space:nowrap;">0.88</div>
<div style="left:555px;top:449px;width:94px;height:25px;background:#fffaf6;line-height:27px;text-align:center;white-space:nowrap;">两球半</div>
<div style="left:650px;top:449px;width:44px;height:25px;background:#fffaf6;line-height:27px;text-align:center;white-space:nowrap;">1.01</div>
<div style="left:695px;top:449px;width:55px;height:25px;background:#f1f8fd;line-height:27px;text-align:center;white-space:nowrap;">1.09</div>
<div style="left:751px;top:449px;width:70px;height:25px;background:#f1f8fd;line-height:27px;text-align:center;white-space:nowrap;">10.74</div>
<div style="left:822px;top:449px;width:71px;height:25px;background:#f1f8fd;line-height:27px;text-align:center;white-space:nowrap;">26.03</div>
<div style="left:894px;top:449px;width:37px;height:25px;line-height:27px;text-align:center;white-space:nowrap;"><span style="color:#dc1414">胜</span></div>
<div style="left:932px;top:449px;width:38px;height:25px;line-height:27px;text-align:center;white-space:nowrap;"><span style="color:#dc1414">赢</span></div>
<div style="left:971px;top:449px;width:57px;height:25px;line-height:27px;text-align:center;white-space:nowrap;"><span style="color:#0000c0">小</span></div>
<div style="left:1px;top:474px;width:1028px;height:1px;background:#c4c4c4"></div>
<div style="left:1px;top:475px;width:1028px;height:25px;background:#efefef"></div>
<div style="left:2px;top:475px;width:80px;height:25px;background:#ff3333;line-height:27px;text-align:center;white-space:nowrap;color:#fff">英超</div>
<div style="left:83px;top:475px;width:75px;height:25px;line-height:27px;text-align:center;white-space:nowrap;">25-01-19</div>
<div style="left:159px;top:475px;width:92px;height:25px;line-height:27px;text-align:center;white-space:nowrap;"><span style="color:#006a00">阿森纳</span></div>
<div style="left:252px;top:475px;width:89px;height:25px;line-height:27px;text-align:center;white-space:nowrap;"><span style="color:#c4141e">2-2</span>(1-0)</div>
<div style="left:342px;top:475px;width:38px;height:25px;line-height:27px;text-align:center;white-space:nowrap;">10-1</div>
<div style="left:381px;top:475px;width:129px;height:25px;line-height:27px;text-align:center;white-space:nowrap;">阿斯顿维拉</div>
<div style="left:511px;top:475px;width:43px;height:25px;background:#fffaf6;line-height:27px;text-align:center;white-space:nowrap;">0.98</div>
<div style="left:555px;top:475px;width:94px;height:25px;background:#fffaf6;line-height:27px;text-align:center;white-space:nowrap;">一球</div>
<div style="left:650px;top:475px;width:44px;height:25px;background:#fffaf6;line-height:27px;text-align:center;white-space:nowrap;">0.91</div>
<div style="left:695px;top:475px;width:55px;height:25px;background:#f1f8fd;line-height:27px;text-align:center;white-space:nowrap;">1.56</div>
<div style="left:751px;top:475px;width:70px;height:25px;background:#f1f8fd;line-height:27px;text-align:center;white-space:nowrap;">4.11</div>
<div style="left:822px;top:475px;width:71px;height:25px;background:#f1f8fd;line-height:27px;text-align:center;white-space:nowrap;">6.01</div>
<div style="left:894px;top:475px;width:37px;height:25px;line-height:27px;text-align:center;white-space:nowrap;"><span style="color:#006a00">平</span></div>
<div style="left:932px;top:475px;width:38px;height:25px;line-height:27px;text-align:center;white-space:nowrap;"><span style="color:#0000c0">输</span></div>
<div style="left:971px;top:475px;width:57px;height:25px;line-height:27px;text-align:center;white-space:nowrap;"><span style="color:#dc1414">大</span></div>
<div style="left:1px;top:500px;width:1028px;height:1px;background:#c4c4c4"></div>
<div style="left:1px;top:501px;width:1028px;height:25px;background:#fff"></div>
<div style="left:2px;top:501px;width:80px;height:25px;background:#ff3333;line-height:27px;text-align:center;white-space:nowrap;color:#fff">英超</div>
<div style="left:83px;top:501px;width:75px;height:25px;line-height:27px;text-align:center;white-space:nowrap;">25-01-16</div>
<div style="left:159px;top:501px;width:92px;height:25px;line-height:27px;text-align:center;white-space:nowrap;"><span style="color:#006a00">阿森纳</span></div>
<div style="left:252px;top:501px;width:89px;height:25px;line-height:27px;text-align:center;white-space:nowrap;"><span style="color:#c4141e">2-1</span>(2-1)</div>
<div style="left:342px;top:501px;width:38px;height:25px;line-height:27px;text-align:center;white-space:nowrap;">10-4</div>
<div style="left:381px;top:501px;width:129px;height:25px;line-height:27px;text-align:center;white-space:nowrap;">托特纳姆热刺</div>
<div style="left:511px;top:501px;width:43px;height:25px;background:#fffaf6;line-height:27px;text-align:center;white-space:nowrap;">1.09</div>
<div style="left:555px;top:501px;width:94px;height:25px;background:#fffaf6;line-height:27px;text-align:center;white-space:nowrap;">球半</div>
<div style="left:650px;top:501px;width:44px;height:25px;background:#fffaf6;line-height:27px;text-align:center;white-space:nowrap;">0.80</div>
<div style="left:695px;top:501px;width:55px;height:25px;background:#f1f8fd;line-height:27px;text-align:center;white-space:nowrap;">1.37</div>
<div style="left:751px;top:501px;width:70px;height:25px;background:#f1f8fd;line-height:27px;text-align:center;white-space:nowrap;">5.29</div>
<div style="left:822px;top:501px;width:71px;height:25px;background:#f1f8fd;line-height:27px;text-align:center;white-space:nowrap;">7.48</div>
<div style="left:894px;top:501px;width:37px;height:25px;line-height:27px;text-align:center;white-space:nowrap;"><span style="color:#dc1414">胜</span></div>
<div style="left:932px;top:501px;width:38px;height:25px;line-height:27px;text-align:center;white-space:nowrap;"><span style="color:#0000c0">输</span></div>
<div style="left:971px;top:501px;width:57px;height:25px;line-height:27px;text-align:center;white-space:nowrap;"><span style="color:#006a00">走</span></div>
<div style="left:1px;top:526px;width:1028px;height:1px;background:#c4c4c4"></div>
<div style="left:1px;top:527px;width:1028px;height:25px;background:#efefef"></div>
<div style="left:2px;top:527px;width:80px;height:25px;background:#0000cc;line-height:27px;text-align:center;white-space:nowrap;color:#fff">英足总杯</div>
<div style="left:83px;top:527px;width:75px;height:25px;line-height:27px;text-align:center;white-space:nowrap;">25-01-12</div>
<div style="left:159px;top:527px;width:92px;height:25px;line-height:27px;text-align:center;white-space:nowrap;"><span style="color:#006a00">阿森纳</span></div>
<div style="left:252px;top:527px;width:89px;height:25px;line-height:27px;text-align:center;white-space:nowrap;"><span style="color:#c4141e">1-1</span>(0-0)</div>
<div style="left:342px;top:527px;width:38px;height:25px;line-height:27px;text-align:center;white-space:nowrap;">7-1</div>
<div style="left:381px;top:527px;width:129px;height:25px;line-height:27px;text-align:center;white-space:nowrap;">曼彻斯特联<span class="bd">1</span></div>
<div style="left:511px;top:527px;width:43px;height:25px;background:#fffaf6;line-height:27px;text-align:center;white-space:nowrap;">0.82</div>
<div style="left:555px;top:527px;width:94px;height:25px;background:#fffaf6;line-height:27px;text-align:center;white-space:nowrap;">半/一</div>
<div style="left:650px;top:527px;width:44px;height:25px;background:#fffaf6;line-height:27px;text-align:center;white-space:nowrap;">1.07</div>
<div style="left:695px;top:527px;width:55px;height:25px;background:#f1f8fd;line-height:27px;text-align:center;white-space:nowrap;">1.63</div>
<div style="left:751px;top:527px;width:70px;height:25px;background:#f1f8fd;line-height:27px;text-align:center;white-space:nowrap;">3.94</div>
<div style="left:822px;top:527px;width:71px;height:25px;background:#f1f8fd;line-height:27px;text-align:center;white-space:nowrap;">5.10</div>
<div style="left:894px;top:527px;width:37px;height:25px;line-height:27px;text-align:center;white-space:nowrap;"><span style="color:#006a00">平</span></div>
<div style="left:932px;top:527px;width:38px;height:25px;line-height:27px;text-align:center;white-space:nowrap;"><span style="color:#0000c0">输</span></div>
<div style="left:971px;top:527px;width:57px;height:25px;line-height:27px;text-align:center;white-space:nowrap;"><span style="color:#0000c0">小</span></div>
<div style="left:1px;top:552px;width:1028px;height:1px;background:#c4c4c4"></div>
<div style="left:1px;top:553px;width:1028px;height:25px;background:#fff"></div>
<div style="left:2px;top:553px;width:80px;height:25px;background:#888888;line-height:27px;text-align:center;white-space:nowrap;color:#fff">英联杯</div>
<div style="left:83px;top:553px;width:75px;height:25px;line-height:27px;text-align:center;white-space:nowrap;">25-01-08</div>
<div style="left:159px;top:553px;width:92px;height:25px;line-height:27px;text-align:center;white-space:nowrap;"><span style="color:#006a00">阿森纳</span></div>
<div style="left:252px;top:553px;width:89px;height:25px;line-height:27px;text-align:center;white-space:nowrap;"><span style="color:#c4141e">0-2</span>(0-1)</div>
<div style="left:342px;top:553px;width:38px;height:25px;line-height:27px;text-align:center;white-space:nowrap;">11-1</div>
<div style="left:381px;top:553px;width:129px;height:25px;line-height:27px;text-align:center;white-space:nowrap;">纽卡斯尔联</div>
<div style="left:511px;top:553px;width:43px;height:25px;background:#fffaf6;line-height:27px;text-align:center;white-space:nowrap;">0.85</div>
<div style="left:555px;top:553px;width:94px;height:25px;background:#fffaf6;line-height:27px;text-align:center;white-space:nowrap;">半/一</div>
<div style="left:650px;top:553px;width:44px;height:25px;background:#fffaf6;line-height:27px;text-align:center;white-space:nowrap;">1.04</div>
<div style="left:695px;top:553px;width:55px;height:25px;background:#f1f8fd;line-height:27px;text-align:center;white-space:nowrap;">1.66</div>
<div style="left:751px;top:553px;width:70px;height:25px;background:#f1f8fd;line-height:27px;text-align:center;white-space:nowrap;">3.90</div>
<div style="left:822px;top:553px;width:71px;height:25px;background:#f1f8fd;line-height:27px;text-align:center;white-space:nowrap;">5.04</div>
<div style="left:894px;top:553px;width:37px;height:25px;line-height:27px;text-align:center;white-space:nowrap;"><span style="color:#0000c0">负</span></div>
<div style="left:932px;top:553px;width:38px;height:25px;line-height:27px;text-align:center;white-space:nowrap;"><span style="color:#0000c0">输</span></div>
<div style="left:971px;top:553px;width:57px;height:25px;line-height:27px;text-align:center;white-space:nowrap;"><span style="color:#0000c0">小</span></div>
<div style="left:1px;top:578px;width:1028px;height:1px;background:#c4c4c4"></div>
<div style="left:1px;top:579px;width:1028px;height:25px;background:#efefef"></div>
<div style="left:2px;top:579px;width:80px;height:25px;background:#ff3333;line-height:27px;text-align:center;white-space:nowrap;color:#fff">英超</div>
<div style="left:83px;top:579px;width:75px;height:25px;line-height:27px;text-align:center;white-space:nowrap;">25-01-05</div>
<div style="left:159px;top:579px;width:92px;height:25px;line-height:27px;text-align:center;white-space:nowrap;">布莱顿</div>
<div style="left:252px;top:579px;width:89px;height:25px;line-height:27px;text-align:center;white-space:nowrap;"><span style="color:#c4141e">1-1</span>(0-1)</div>
<div style="left:342px;top:579px;width:38px;height:25px;line-height:27px;text-align:center;white-space:nowrap;">2-5</div>
<div style="left:381px;top:579px;width:129px;height:25px;line-height:27px;text-align:center;white-space:nowrap;"><span style="color:#006a00">阿森纳</span></div>
<div style="left:511px;top:579px;width:43px;height:25px;background:#fffaf6;line-height:27px;text-align:center;white-space:nowrap;">0.88</div>
<div style="left:555px;top:579px;width:94px;height:25px;background:#fffaf6;line-height:27px;text-align:center;white-space:nowrap;">受半/一</div>
<div style="left:650px;top:579px;width:44px;height:25px;background:#fffaf6;line-height:27px;text-align:center;white-space:nowrap;">1.01</div>
<div style="left:695px;top:579px;width:55px;height:25px;background:#f1f8fd;line-height:27px;text-align:center;white-space:nowrap;">4.48</div>
<div style="left:751px;top:579px;width:70px;height:25px;background:#f1f8fd;line-height:27px;text-align:center;white-space:nowrap;">3.61</div>
<div style="left:822px;top:579px;width:71px;height:25px;background:#f1f8fd;line-height:27px;text-align:center;white-space:nowrap;">1.81</div>
<div style="left:894px;top:579px;width:37px;height:25px;line-height:27px;text-align:center;white-space:nowrap;"><span style="color:#006a00">平</span></div>
<div style="left:932px;top:579px;width:38px;height:25px;line-height:27px;text-align:center;white-space:nowrap;"><span style="color:#0000c0">输</span></div>
<div style="left:971px;top:579px;width:57px;height:25px;line-height:27px;text-align:center;white-space:nowrap;"><span style="color:#0000c0">小</span></div>
<div style="left:1px;top:604px;width:1028px;height:1px;background:#c4c4c4"></div>
<div style="left:1px;top:605px;width:1028px;height:25px;background:#fff"></div>
<div style="left:2px;top:605px;width:80px;height:25px;background:#ff3333;line-height:27px;text-align:center;white-space:nowrap;color:#fff">英超</div>
<div style="left:83px;top:605px;width:75px;height:25px;line-height:27px;text-align:center;white-space:nowrap;">25-01-02</div>
<div style="left:159px;top:605px;width:92px;height:25px;line-height:27px;text-align:center;white-space:nowrap;">布伦特福德</div>
<div style="left:252px;top:605px;width:89px;height:25px;line-height:27px;text-align:center;white-space:nowrap;"><span style="color:#c4141e">1-3</span>(1-1)</div>
<div style="left:342px;top:605px;width:38px;height:25px;line-height:27px;text-align:center;white-space:nowrap;">4-3</div>
<div style="left:381px;top:605px;width:129px;height:25px;line-height:27px;text-align:center;white-space:nowrap;"><span style="color:#006a00">阿森纳</span></div>
<div style="left:511px;top:605px;width:43px;height:25px;background:#fffaf6;line-height:27px;text-align:center;white-space:nowrap;">0.92</div>
<div style="left:555px;top:605px;width:94px;height:25px;background:#fffaf6;line-height:27px;text-align:center;white-space:nowrap;">受一球</div>
<div style="left:650px;top:605px;width:44px;height:25px;background:#fffaf6;line-height:27px;text-align:center;white-space:nowrap;">0.97</div>
<div style="left:695px;top:605px;width:55px;height:25px;background:#f1f8fd;line-height:27px;text-align:center;white-space:nowrap;">5.86</div>
<div style="left:751px;top:605px;width:70px;height:25px;background:#f1f8fd;line-height:27px;text-align:center;white-space:nowrap;">4.48</div>
<div style="left:822px;top:605px;width:71px;height:25px;background:#f1f8fd;line-height:27px;text-align:center;white-space:nowrap;">1.52</div>
<div style="left:894px;top:605px;width:37px;height:25px;line-height:27px;text-align:center;white-space:nowrap;"><span style="color:#dc1414">胜</span></div>
<div style="left:932px;top:605px;width:38px;height:25px;line-height:27px;text-align:center;white-space:nowrap;"><span style="color:#dc1414">赢</span></div>
<div style="left:971px;top:605px;width:57px;height:25px;line-height:27px;text-align:center;white-space:nowrap;"><span style="color:#dc1414">大</span></div>
<div style="left:1px;top:630px;width:1028px;height:1px;background:#c4c4c4"></div>
<div style="left:1px;top:631px;width:1028px;height:25px;background:#efefef"></div>
<div style="left:2px;top:631px;width:80px;height:25px;background:#ff3333;line-height:27px;text-align:center;white-space:nowrap;color:#fff">英超</div>
<div style="left:83px;top:631px;width:75px;height:25px;line-height:27px;text-align:center;white-space:nowrap;">24-12-28</div>
<div style="left:159px;top:631px;width:92px;height:25px;line-height:27px;text-align:center;white-space:nowrap;"><span style="color:#006a00">阿森纳</span></div>
<div style="left:252px;top:631px;width:89px;height:25px;line-height:27px;text-align:center;white-space:nowrap;"><span style="color:#c4141e">1-0</span>(1-0)</div>
<div style="left:342px;top:631px;width:38px;height:25px;line-height:27px;text-align:center;white-space:nowrap;">5-1</div>
<div style="left:381px;top:631px;width:129px;height:25px;line-height:27px;text-align:center;white-space:nowrap;">伊普斯维奇</div>
<div style="left:511px;top:631px;width:43px;height:25px;background:#fffaf6;line-height:27px;text-align:center;white-space:nowrap;">0.99</div>
<div style="left:555px;top:631px;width:94px;height:25px;background:#fffaf6;line-height:27px;text-align:center;white-space:nowrap;">两/两球半</div>
<div style="left:650px;top:631px;width:44px;height:25px;background:#fffaf6;line-height:27px;text-align:center;white-space:nowrap;">0.90</div>
<div style="left:695px;top:631px;width:55px;height:25px;background:#f1f8fd;line-height:27px;text-align:center;white-space:nowrap;">1.14</div>
<div style="left:751px;top:631px;width:70px;height:25px;background:#f1f8fd;line-height:27px;text-align:center;white-space:nowrap;">8.48</div>
<div style="left:822px;top:631px;width:71px;height:25px;background:#f1f8fd;line-height:27px;text-align:center;white-space:nowrap;">17.90</div>
<div style="left:894px;top:631px;width:37px;height:25px;line-height:27px;text-align:center;white-space:nowrap;"><span style="color:#dc1414">胜</span></div>
<div style="left:932px;top:631px;width:38px;height:25px;line-height:27px;text-align:center;white-space:nowrap;"><span style="color:#0000c0">输</span></div>
<div style="left:971px;top:631px;width:57px;height:25px;line-height:27px;text-align:center;white-space:nowrap;"><span style="color:#0000c0">小</span></div>
<div style="left:1px;top:656px;width:1028px;height:1px;background:#c4c4c4"></div>
<div style="left:1px;top:657px;width:1028px;height:25px;background:#fff"></div>
<div style="left:2px;top:657px;width:80px;height:25px;background:#ff3333;line-height:27px;text-align:center;white-space:nowrap;color:#fff">英超</div>
<div style="left:83px;top:657px;width:75px;height:25px;line-height:27px;text-align:center;white-space:nowrap;">24-12-22</div>
<div style="left:159px;top:657px;width:92px;height:25px;line-height:27px;text-align:center;white-space:nowrap;">水晶宫</div>
<div style="left:252px;top:657px;width:89px;height:25px;line-height:27px;text-align:center;white-space:nowrap;"><span style="color:#c4141e">1-5</span>(1-3)</div>
<div style="left:342px;top:657px;width:38px;height:25px;line-height:27px;text-align:center;white-space:nowrap;">3-3</div>
<div style="left:381px;top:657px;width:129px;height:25px;line-height:27px;text-align:center;white-space:nowrap;"><span style="color:#006a00">阿森纳</span></div>
<div style="left:511px;top:657px;width:43px;height:25px;background:#fffaf6;line-height:27px;text-align:center;white-space:nowrap;">1.11</div>
<div style="left:555px;top:657px;width:94px;height:25px;background:#fffaf6;line-height:27px;text-align:center;white-space:nowrap;">受一球</div>
<div style="left:650px;top:657px;width:44px;height:25px;background:#fffaf6;line-height:27px;text-align:center;white-space:nowrap;">0.79</div>
<div style="left:695px;top:657px;width:55px;height:25px;background:#f1f8fd;line-height:27px;text-align:center;white-space:nowrap;">6.97</div>
<div style="left:751px;top:657px;width:70px;height:25px;background:#f1f8fd;line-height:27px;text-align:center;white-space:nowrap;">4.39</div>
<div style="left:822px;top:657px;width:71px;height:25px;background:#f1f8fd;line-height:27px;text-align:center;white-space:nowrap;">1.47</div>
<div style="left:894px;top:657px;width:37px;height:25px;line-height:27px;text-align:center;white-space:nowrap;"><span style="color:#dc1414">胜</span></div>
<div style="left:932px;top:657px;width:38px;height:25px;line-height:27px;text-align:center;white-space:nowrap;"><span style="color:#dc1414">赢</span></div>
<div style="left:971px;top:657px;width:57px;height:25px;line-height:27px;text-align:center;white-space:nowrap;"><span style="color:#dc1414">大</span></div>
<div style="left:1px;top:682px;width:1028px;height:1px;background:#c4c4c4"></div>
<div style="left:1px;top:683px;width:1028px;height:25px;background:#efefef"></div>
<div style="left:2px;top:683px;width:80px;height:25px;background:#888888;line-height:27px;text-align:center;white-space:nowrap;color:#fff">英联杯</div>
<div style="left:83px;top:683px;width:75px;height:25px;line-height:27px;text-align:center;white-space:nowrap;">24-12-19</div>
<div style="left:159px;top:683px;width:92px;height:25px;line-height:27px;text-align:center;white-space:nowrap;"><span style="color:#006a00">阿森纳</span></div>
<div style="left:252px;top:683px;width:89px;height:25px;line-height:27px;text-align:center;white-space:nowrap;"><span style="color:#c4141e">3-2</span>(0-1)</div>
<div style="left:342px;top:683px;width:38px;height:25px;line-height:27px;text-align:center;white-space:nowrap;">4-2</div>
<div style="left:381px;top:683px;width:129px;height:25px;line-height:27px;text-align:center;white-space:nowrap;">水晶宫</div>
<div style="left:511px;top:683px;width:43px;height:25px;background:#fffaf6;line-height:27px;text-align:center;white-space:nowrap;">0.89</div>
<div style="left:555px;top:683px;width:94px;height:25px;background:#fffaf6;line-height:27px;text-align:center;white-space:nowrap;">半/一</div>
<div style="left:650px;top:683px;width:44px;height:25px;background:#fffaf6;line-height:27px;text-align:center;white-space:nowrap;">1.00</div>
<div style="left:695px;top:683px;width:55px;height:25px;background:#f1f8fd;line-height:27px;text-align:center;white-space:nowrap;">1.66</div>
<div style="left:751px;top:683px;width:70px;height:25px;background:#f1f8fd;line-height:27px;text-align:center;white-space:nowrap;">3.80</div>
<div style="left:822px;top:683px;width:71px;height:25px;background:#f1f8fd;line-height:27px;text-align:center;white-space:nowrap;">5.27</div>
<div style="left:894px;top:683px;width:37px;height:25px;line-height:27px;text-align:center;white-space:nowrap;"><span style="color:#dc1414">胜</span></div>
<div style="left:932px;top:683px;width:38px;height:25px;line-height:27px;text-align:center;white-space:nowrap;"><span style="color:#dc1414">赢</span></div>
<div style="left:971px;top:683px;width:57px;height:25px;line-height:27px;text-align:center;white-space:nowrap;"><span style="color:#dc1414">大</span></div>
<div style="left:1px;top:708px;width:1028px;height:1px;background:#c4c4c4"></div>
<div style="left:1px;top:448px;width:1px;height:261px;background:#c4c4c4"></div>
<div style="left:82px;top:448px;width:1px;height:261px;background:#c4c4c4"></div>
<div style="left:158px;top:448px;width:1px;height:261px;background:#c4c4c4"></div>
<div style="left:251px;top:448px;width:1px;height:261px;background:#c4c4c4"></div>
<div style="left:341px;top:448px;width:1px;height:261px;background:#c4c4c4"></div>
<div style="left:380px;top:448px;width:1px;height:261px;background:#c4c4c4"></div>
<div style="left:510px;top:448px;width:1px;height:261px;background:#c4c4c4"></div>
<div style="left:554px;top:448px;width:1px;height:261px;background:#c4c4c4"></div>
<div style="left:649px;top:448px;width:1px;height:261px;background:#c4c4c4"></div>
<div style="left:694px;top:448px;width:1px;height:261px;background:#c4c4c4"></div>
<div style="left:750px;top:448px;width:1px;height:261px;background:#c4c4c4"></div>
<div style="left:821px;top:448px;width:1px;height:261px;background:#c4c4c4"></div>
<div style="left:893px;top:448px;width:1px;height:261px;background:#c4c4c4"></div>
<div style="left:931px;top:448px;width:1px;height:261px;background:#c4c4c4"></div>
<div style="left:970px;top:448px;width:1px;height:261px;background:#c4c4c4"></div>
<div style="left:1028px;top:448px;width:1px;height:261px;background:#c4c4c4"></div>
<div style="left:1px;top:448px;width:1028px;height:1px;background:#c4c4c4"></div>
<div style="left:82px;top:449px;width:1px;height:260px;background:#fafafa"></div>
<div style="left:2px;top:474px;width:80px;height:1px;background:#fafafa"></div>
<div style="left:2px;top:500px;width:80px;height:1px;background:#fafafa"></div>
<div style="left:2px;top:526px;width:80px;height:1px;background:#fafafa"></div>
<div style="left:2px;top:552px;width:80px;height:1px;background:#fafafa"></div>
<div style="left:2px;top:578px;width:80px;height:1px;background:#fafafa"></div>
<div style="left:2px;top:604px;width:80px;height:1px;background:#fafafa"></div>
<div style="left:2px;top:630px;width:80px;height:1px;background:#fafafa"></div>
<div style="left:2px;top:656px;width:80px;height:1px;background:#fafafa"></div>
<div style="left:2px;top:682px;width:80px;height:1px;background:#fafafa"></div>
<div style="left:2px;top:708px;width:80px;height:1px;background:#fafafa"></div>
<div style="left:2px;top:709px;width:1026px;height:25px;background:#fff;line-height:27px;text-align:center;white-space:nowrap;word-spacing:2px">近<span style="color:#c4141e">10</span>场,胜6平3负1, 胜率:<span style="color:#c4141e">60%</span> 让胜率:<span style="color:#c4141e">40%</span> 大率:<span style="color:#c4141e">40%</span> 单率:<span style="color:#c4141e">40%</span></div>
<div style="left:1px;top:708px;width:1px;height:27px;background:#c4c4c4"></div>
<div style="left:1028px;top:708px;width:1px;height:27px;background:#c4c4c4"></div>
<div style="left:1px;top:734px;width:1028px;height:1px;background:#c4c4c4"></div>
<div style="left:542px;top:410px;width:61px;height:19px;background:#fff;border:1px solid #6b6b6b;border-radius:1px;box-sizing:border-box"><span style="position:absolute;left:6px;top:0px;line-height:17px;font-size:13px;color:#000">Crow*</span><svg width="11" height="7" viewBox="0 0 11 7" style="position:absolute;right:4px;top:4px"><path d="M1.2 1.2 L5.5 5.5 L9.8 1.2" fill="none" stroke="#000" stroke-width="2.1"/></svg></div>
<div style="left:611px;top:410px;width:51px;height:19px;background:#fff;border:1px solid #6b6b6b;border-radius:1px;box-sizing:border-box"><span style="position:absolute;left:4px;top:0px;line-height:17px;font-size:13px;color:#000">终指</span><svg width="11" height="7" viewBox="0 0 11 7" style="position:absolute;right:4px;top:4px"><path d="M1.2 1.2 L5.5 5.5 L9.8 1.2" fill="none" stroke="#000" stroke-width="2.1"/></svg></div>
<div style="left:729px;top:410px;width:70px;height:19px;background:#fff;border:1px solid #6b6b6b;border-radius:1px;box-sizing:border-box"><span style="position:absolute;left:4px;top:0px;line-height:17px;font-size:13px;color:#000">平均值</span><svg width="11" height="7" viewBox="0 0 11 7" style="position:absolute;right:4px;top:4px"><path d="M1.2 1.2 L5.5 5.5 L9.8 1.2" fill="none" stroke="#000" stroke-width="2.1"/></svg></div>
<div style="left:807px;top:410px;width:51px;height:19px;background:#fff;border:1px solid #6b6b6b;border-radius:1px;box-sizing:border-box"><span style="position:absolute;left:4px;top:0px;line-height:17px;font-size:13px;color:#000">终指</span><svg width="11" height="7" viewBox="0 0 11 7" style="position:absolute;right:4px;top:4px"><path d="M1.2 1.2 L5.5 5.5 L9.8 1.2" fill="none" stroke="#000" stroke-width="2.1"/></svg></div>
<div style="left:935px;top:410px;width:51px;height:19px;background:#fff;border:1px solid #6b6b6b;border-radius:1px;box-sizing:border-box"><span style="position:absolute;left:4px;top:0px;line-height:17px;font-size:13px;color:#000">全场</span><svg width="11" height="7" viewBox="0 0 11 7" style="position:absolute;right:4px;top:4px"><path d="M1.2 1.2 L5.5 5.5 L9.8 1.2" fill="none" stroke="#000" stroke-width="2.1"/></svg></div>
</body></html>
